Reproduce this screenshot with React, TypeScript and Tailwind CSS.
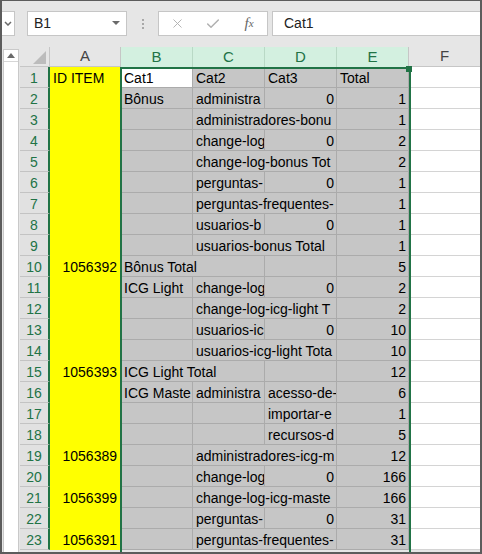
import { X, Check } from 'lucide-react'

type Cell = { t?: string; s?: number; r?: boolean; w?: boolean }
type Row = { a?: string; c: Cell[] }

const spanW: Record<number, string> = {
  1: 'w-[72px]',
  2: 'w-[144px]',
  3: 'w-[216px]',
}

// texts are cut where the next filled cell starts, as the sheet shows them
const rows: Row[] = [
  { a: 'ID ITEM', c: [{ t: 'Cat1', w: true }, { t: 'Cat2' }, { t: 'Cat3' }, { t: 'Total' }] },
  { c: [{ t: 'Bônus' }, { t: 'administra' }, { t: '0', r: true }, { t: '1', r: true }] },
  { c: [{}, { t: 'administradores-bonu', s: 2 }, { t: '1', r: true }] },
  { c: [{}, { t: 'change-log' }, { t: '0', r: true }, { t: '2', r: true }] },
  { c: [{}, { t: 'change-log-bonus Tot', s: 2 }, { t: '2', r: true }] },
  { c: [{}, { t: 'perguntas-' }, { t: '0', r: true }, { t: '1', r: true }] },
  { c: [{}, { t: 'perguntas-frequentes-', s: 2 }, { t: '1', r: true }] },
  { c: [{}, { t: 'usuarios-b' }, { t: '0', r: true }, { t: '1', r: true }] },
  { c: [{}, { t: 'usuarios-bonus Total', s: 2 }, { t: '1', r: true }] },
  { a: '1056392', c: [{ t: 'Bônus Total', s: 2 }, {}, { t: '5', r: true }] },
  { c: [{ t: 'ICG Light' }, { t: 'change-log' }, { t: '0', r: true }, { t: '2', r: true }] },
  { c: [{}, { t: 'change-log-icg-light T', s: 2 }, { t: '2', r: true }] },
  { c: [{}, { t: 'usuarios-ic' }, { t: '0', r: true }, { t: '10', r: true }] },
  { c: [{}, { t: 'usuarios-icg-light Tota', s: 2 }, { t: '10', r: true }] },
  { a: '1056393', c: [{ t: 'ICG Light Total', s: 2 }, {}, { t: '12', r: true }] },
  { c: [{ t: 'ICG Maste' }, { t: 'administra' }, { t: 'acesso-de-' }, { t: '6', r: true }] },
  { c: [{}, {}, { t: 'importar-e' }, { t: '1', r: true }] },
  { c: [{}, {}, { t: 'recursos-d' }, { t: '5', r: true }] },
  { a: '1056389', c: [{}, { t: 'administradores-icg-m', s: 2 }, { t: '12', r: true }] },
  { c: [{}, { t: 'change-log' }, { t: '0', r: true }, { t: '166', r: true }] },
  { a: '1056399', c: [{}, { t: 'change-log-icg-maste', s: 2 }, { t: '166', r: true }] },
  { c: [{}, { t: 'perguntas-' }, { t: '0', r: true }, { t: '31', r: true }] },
  { a: '1056391', c: [{}, { t: 'perguntas-frequentes-', s: 2 }, { t: '31', r: true }] },
]

const selCols = ['B', 'C', 'D', 'E']

export default function App() {
  return (
    <div className="relative w-[482px] h-[554px] overflow-hidden bg-[#e6e6e6] border-x-2 border-b-2 border-t border-[#5c5c5c] font-['Liberation_Sans',Arial,sans-serif] text-black">
      {/* Formula bar */}
      <div className="flex h-[46px] items-start pt-[10px]">
        <div className="flex h-[25px] w-[13px] items-center justify-center border-y border-r border-[#c6c6c6] bg-white">
          <svg width="8" height="5" viewBox="0 0 8 5">
            <path d="M1 1l3 3 3-3" fill="none" stroke="#6a6a6a" strokeWidth="1.5" />
          </svg>
        </div>
        <div className="ml-[12px] flex h-[25px] w-[100px] items-center justify-between border border-[#c6c6c6] bg-white pl-[6px] pr-[6px] text-[14px] text-[#222]">
          <span>B1</span>
          <svg width="8" height="5" viewBox="0 0 8 5">
            <path d="M0 0h8L4 4z" fill="#6a6a6a" />
          </svg>
        </div>
        <div className="ml-[15px] flex h-[25px] flex-col items-center justify-center gap-[2px]">
          <span className="h-[2px] w-[2px] bg-[#a8a8a8]" />
          <span className="h-[2px] w-[2px] bg-[#a8a8a8]" />
          <span className="h-[2px] w-[2px] bg-[#a8a8a8]" />
        </div>
        <div className="ml-[14px] flex h-[25px] w-[110px] items-center border border-[#c6c6c6] bg-white">
          <span className="flex w-[36px] justify-center">
            <X size={15} strokeWidth={1.5} color="#b0b0b0" />
          </span>
          <span className="flex w-[36px] justify-center">
            <Check size={16} strokeWidth={2.2} color="#b0b0b0" />
          </span>
          <span className="flex w-[36px] justify-center font-['Liberation_Serif',serif] text-[15px] italic text-[#666]">
            f<span className="mt-[3px] text-[11px]">x</span>
          </span>
        </div>
        <div className="ml-[4px] flex h-[25px] flex-1 items-center border-y border-l border-[#c6c6c6] bg-white pl-[11px] text-[14px] text-[#222]">
          Cat1
        </div>
      </div>

      <div className="flex">
        {/* Vertical scrollbar */}
        <div className="h-[510px] w-[18px] shrink-0 pl-[1px] pr-[1px] pt-[2px]">
          <div className="flex h-full flex-col border border-[#c9c9c9] bg-white">
            <div className="flex h-[12px] items-center justify-center border-b border-[#d6d6d6]">
              <svg width="8" height="5" viewBox="0 0 8 5">
                <path d="M0 5h8L4 0z" fill="#6a6a6a" />
              </svg>
            </div>
          </div>
        </div>

        {/* Sheet */}
        <div className="relative">
          {/* Column headers */}
          <div className="flex h-[20px] text-[15px]">
            <div className="relative w-[30px] shrink-0 border-b border-r border-[#c6c6c6]">
              <svg className="absolute left-0 top-0" width="30" height="20" viewBox="0 0 30 20">
                <path d="M13 17h13V4z" fill="#bcbcbc" />
              </svg>
            </div>
            <div className="flex w-[71px] shrink-0 items-center justify-center border-b border-r border-[#c6c6c6] text-[#444]">
              A
            </div>
            {selCols.map((c, i) => (
              <div
                key={c}
                className={`flex w-[72px] shrink-0 items-center justify-center bg-[#d3f0e0] text-[#217346] border-r ${i === 3 ? 'border-[#c6c6c6]' : 'border-[#b9d9c6]'}`}
              >
                {c}
              </div>
            ))}
            <div className="flex w-[71px] shrink-0 items-center justify-center border-b border-[#c6c6c6] text-[#444]">
              F
            </div>
          </div>

          {/* Rows */}
          {rows.map((row, i) => {
            const num = row.a !== undefined && /^\d+$/.test(row.a)
            return (
              <div key={i} className="flex h-[21px] text-[14px]">
                <div className="w-[30px] shrink-0 border-b border-r-2 border-b-[#c3c3c3] border-r-[#217346] bg-[#e1e1e1] pt-[2px] text-center leading-[19px] text-[#217346]">
                  {i + 1}
                </div>
                <div
                  className={`w-[71px] shrink-0 overflow-hidden whitespace-nowrap bg-[#ffff00] pt-[2px] leading-[19px] ${num ? 'pr-[4px] text-right' : 'pl-[3px]'}`}
                >
                  {row.a}
                </div>
                {row.c.map((cell, j) => (
                  <div
                    key={j}
                    className={`${spanW[cell.s ?? 1]} shrink-0 overflow-hidden whitespace-nowrap border-b border-r border-[#ababab] pt-[2px] leading-[19px] ${cell.w ? 'bg-white' : 'bg-[#c6c6c6]'} ${cell.r ? 'pr-[2px] text-right' : 'pl-[3px]'}`}
                  >
                    {cell.t}
                  </div>
                ))}
                <div className="w-[71px] shrink-0 border-b border-[#d4d4d4] bg-white" />
              </div>
            )
          })}

          {/* Selection outline + fill handle */}
          <div className="pointer-events-none absolute left-[100px] top-[20px] h-[600px] w-[291px] border-2 border-[#217346]" />
          <div className="pointer-events-none absolute left-[386px] top-[19px] h-[6px] w-[6px] bg-[#217346]" />
        </div>
      </div>
    </div>
  )
}
